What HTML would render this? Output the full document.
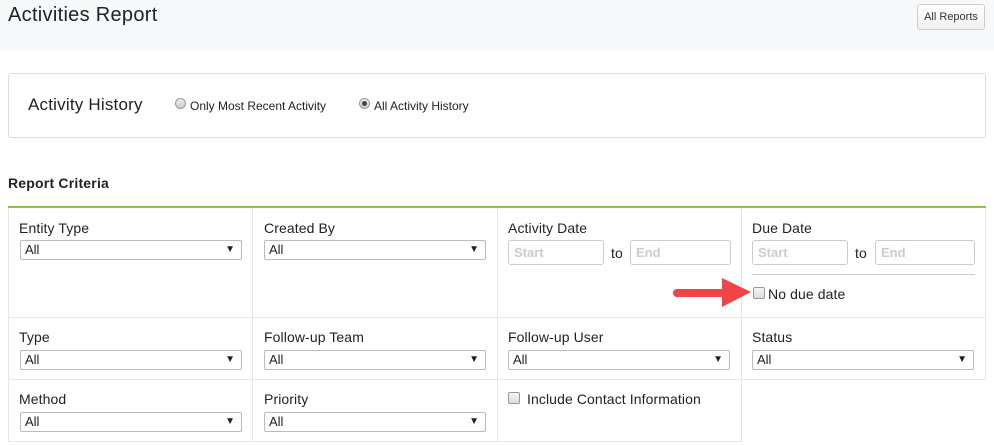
<!DOCTYPE html>
<html><head><meta charset="utf-8"><style>
*{box-sizing:border-box;margin:0;padding:0}
body{width:994px;height:446px;background:#fff;font-family:"Liberation Sans",sans-serif;color:#222;position:relative;overflow:hidden}
.a{position:absolute}
.hdr{left:0;top:0;width:994px;height:51px;background:#f7f8fa}
.btn{left:917px;top:4px;width:68px;height:26px;border:1px solid #ccc;border-radius:3px;background:linear-gradient(#fff,#f0f0f0);font-size:11px;text-align:center;line-height:24px;color:#333}
.box{left:8px;top:73px;width:978px;height:65px;border:1px solid #ddd;border-radius:3px}
.radio{width:11px;height:11px;border:1px solid #999;border-radius:50%;background:linear-gradient(#eee,#ccc)}
.lbl{font-size:14px;color:#222;letter-spacing:0.1px}
.sel{width:222px;height:20px;border:1px solid #bbb;border-radius:2px;font-size:13px;line-height:18px;padding-left:4px;background:#fff}
.sel:after{content:"\25BC";position:absolute;right:6px;top:0;font-size:10px}
.inp{height:25px;border:1px solid #ccc;border-radius:3px;font-size:13px;font-weight:bold;color:#ccc;padding-left:5px;line-height:23px}
.vl{width:1px;background:#e6e6e6}
.hl{height:1px;background:#e6e6e6}
.cb{width:12px;height:12px;border:1px solid #999;border-radius:2px;background:linear-gradient(#f4f4f4,#ddd)}
</style></head><body>
<div class="a hdr"></div>
<div class="a" style="left:8px;top:4px;font-size:20px;letter-spacing:0.3px;color:#222">Activities Report</div>
<div class="a btn">All Reports</div>
<div class="a box"></div>
<div class="a" style="left:28px;top:95px;font-size:17px;letter-spacing:0.2px;color:#222">Activity History</div>
<div class="a radio" style="left:175px;top:98px"></div>
<div class="a" style="left:190px;top:99px;font-size:12px">Only Most Recent Activity</div>
<div class="a radio" style="left:359px;top:98px"><div style="width:5px;height:5px;border-radius:50%;background:#444;margin:2px"></div></div>
<div class="a" style="left:374px;top:99px;font-size:12px">All Activity History</div>
<div class="a" style="left:8px;top:175px;font-size:14px;font-weight:bold;letter-spacing:0.2px">Report Criteria</div>
<div class="a" style="left:8px;top:206px;width:978px;height:2px;background:#8fc04a"></div>
<div class="a vl" style="left:8px;top:208px;height:234px"></div>
<div class="a vl" style="left:252px;top:208px;height:234px"></div>
<div class="a vl" style="left:497px;top:208px;height:234px"></div>
<div class="a vl" style="left:741px;top:208px;height:234px"></div>
<div class="a vl" style="left:985px;top:208px;height:172px"></div>
<div class="a hl" style="left:8px;top:317px;width:978px"></div>
<div class="a hl" style="left:8px;top:379px;width:978px"></div>
<div class="a hl" style="left:8px;top:441px;width:734px"></div>
<div class="a lbl" style="left:19px;top:220px">Entity Type</div>
<div class="a sel" style="left:20px;top:240px">All</div>
<div class="a lbl" style="left:264px;top:220px">Created By</div>
<div class="a sel" style="left:264px;top:240px">All</div>
<div class="a lbl" style="left:508px;top:220px">Activity Date</div>
<div class="a inp" style="left:508px;top:240px;width:96px">Start</div>
<div class="a lbl" style="left:611px;top:245px">to</div>
<div class="a inp" style="left:630px;top:240px;width:101px">End</div>
<div class="a lbl" style="left:752px;top:220px">Due Date</div>
<div class="a inp" style="left:752px;top:240px;width:96px">Start</div>
<div class="a lbl" style="left:855px;top:245px">to</div>
<div class="a inp" style="left:875px;top:240px;width:100px">End</div>
<div class="a" style="left:752px;top:274px;width:223px;height:1px;background:#ccc"></div>
<div class="a cb" style="left:753px;top:287px"></div>
<div class="a lbl" style="left:768px;top:286px">No due date</div>
<svg class="a" style="left:665px;top:275px" width="90" height="38"><path d="M12 14 L57 14 L57 3 L86 17 L57 32 L57 22 L12 22 A4 4 0 0 1 12 14Z" fill="#f04447"/></svg>
<div class="a lbl" style="left:19px;top:329px">Type</div>
<div class="a sel" style="left:20px;top:350px">All</div>
<div class="a lbl" style="left:264px;top:329px">Follow-up Team</div>
<div class="a sel" style="left:264px;top:350px">All</div>
<div class="a lbl" style="left:508px;top:329px">Follow-up User</div>
<div class="a sel" style="left:508px;top:350px">All</div>
<div class="a lbl" style="left:752px;top:329px">Status</div>
<div class="a sel" style="left:752px;top:350px">All</div>
<div class="a lbl" style="left:19px;top:391px">Method</div>
<div class="a sel" style="left:20px;top:412px">All</div>
<div class="a lbl" style="left:264px;top:391px">Priority</div>
<div class="a sel" style="left:264px;top:412px">All</div>
<div class="a cb" style="left:508px;top:392px"></div>
<div class="a lbl" style="left:527px;top:391px">Include Contact Information</div>
</body></html>
